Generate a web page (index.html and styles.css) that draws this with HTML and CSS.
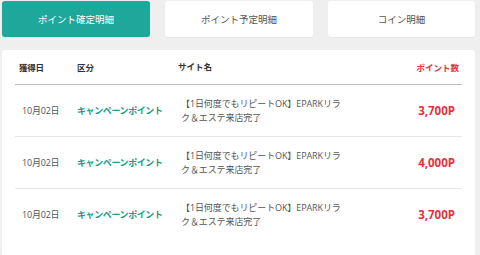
FILE: index.html
```html
<!DOCTYPE html>
<html lang="ja">
<head>
<meta charset="utf-8">
<link rel="stylesheet" href="styles.css">
</head>
<body>
<div class="page">
  <nav class="tabs">
    <div class="tab active">ポイント確定明細</div>
    <div class="tab">ポイント予定明細</div>
    <div class="tab">コイン明細</div>
  </nav>
  <section class="card">
    <div class="row head">
      <div class="c-date">獲得日</div>
      <div class="c-type">区分</div>
      <div class="c-site">サイト名</div>
      <div class="c-pt">ポイント数</div>
    </div>
    <div class="row">
      <div class="c-date">10月02日</div>
      <div class="c-type">キャンペーンポイント</div>
      <div class="c-site">【1日何度でもリピートOK】EPARKリラク＆エステ来店完了</div>
      <div class="c-pt">3,700P</div>
    </div>
    <div class="row">
      <div class="c-date">10月02日</div>
      <div class="c-type">キャンペーンポイント</div>
      <div class="c-site">【1日何度でもリピートOK】EPARKリラク＆エステ来店完了</div>
      <div class="c-pt">4,000P</div>
    </div>
    <div class="row last">
      <div class="c-date">10月02日</div>
      <div class="c-type">キャンペーンポイント</div>
      <div class="c-site">【1日何度でもリピートOK】EPARKリラク＆エステ来店完了</div>
      <div class="c-pt">3,700P</div>
    </div>
  </section>
</div>
</body>
</html>
```
FILE: styles.css
```css
html, body {
  margin: 0;
  padding: 0;
  background: #efefef;
}
body {
  font-family: "Open Sans", "Noto Sans CJK JP", sans-serif;
  color: #555;
  font-size: 9px;
}
.page {
  padding: 1px 5px 0 2px;
}
.tabs {
  display: grid;
  grid-template-columns: 148px 148px 147px;
  column-gap: 15px;
}
.tab {
  height: 36px;
  background: #fff;
  border-radius: 3px;
  display: flex;
  align-items: center;
  justify-content: center;
  font-size: 9.5px;
  color: #555;
  box-shadow: 0 1px 1px rgba(0,0,0,0.04);
}
.tab.active {
  background: #1ea89b;
  color: #fff;
}
.card {
  margin-top: 13px;
  background: #fff;
  border-radius: 3px;
  padding: 0 13px 16px 13px;
}
.row {
  display: grid;
  grid-template-columns: 58px 105px 164px 1fr;
  align-items: center;
  height: 51px;
  border-bottom: 1px solid #e6e6e6;
}
.row.last {
  border-bottom: none;
}
.row.head {
  height: 34px;
  border-bottom: 1px solid #bdbdbd;
  font-weight: bold;
  color: #333;
  font-size: 8.5px;
}
.row > div {
  padding-left: 4px;
}
.c-date {
  padding-left: 7px !important;
  letter-spacing: -0.2px;
}
.head .c-date {
  padding-left: 4px !important;
}
.c-type {
  color: #22998b;
  font-weight: bold;
  font-size: 9px;
  letter-spacing: -0.4px;
}
.head .c-type {
  color: #333;
  font-size: 8.5px;
  letter-spacing: 0;
}
.c-site {
  line-height: 14px;
  padding-left: 3px !important;
  letter-spacing: -0.1px;
}
.head .c-site {
  padding-left: 0 !important;
  letter-spacing: 0;
}
.c-pt {
  text-align: right;
  color: #e2323c;
  font-weight: bold;
  font-size: 11.5px;
  padding-right: 7px;
}
.head .c-pt {
  font-size: 8.5px;
  color: #e2323c;
  padding-right: 3px;
}
```
